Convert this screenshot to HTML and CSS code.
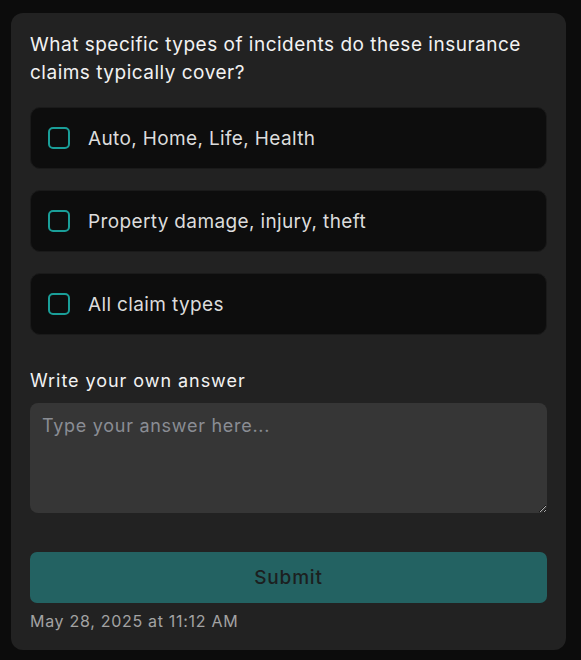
FILE: index.html
```html
<!DOCTYPE html>
<html>
<head>
<meta charset="utf-8">
<link rel="stylesheet" href="styles.css">
</head>
<body>
<div class="card">
  <p class="question">What specific types of incidents do these insurance claims typically cover?</p>
  <div class="options">
    <label class="option"><span class="box"></span><span class="opt-text">Auto, Home, Life, Health</span></label>
    <label class="option"><span class="box"></span><span class="opt-text">Property damage, injury, theft</span></label>
    <label class="option"><span class="box"></span><span class="opt-text">All claim types</span></label>
  </div>
  <div class="own-label">Write your own answer</div>
  <textarea class="answer" placeholder="Type your answer here..."></textarea>
  <button class="submit">Submit</button>
  <div class="date">May 28, 2025 at 11:12 AM</div>
</div>
</body>
</html>
```

FILE: styles.css
```css
html, body {
  margin: 0;
  padding: 0;
  background: #0c0c0c;
}
body {
  padding: 13px 15px 12px 11px;
  font-family: Inter, "Noto Sans", sans-serif;
}
.card {
  background: #222222;
  border-radius: 12px;
  padding: 18px 19px 19px 19px;
  display: flex;
  flex-direction: column;
}
.question {
  margin: 0;
  color: #f2f2f2;
  font-size: 19px;
  line-height: 28px;
  font-weight: 400;
  letter-spacing: 0.5px;
}
.options {
  display: flex;
  flex-direction: column;
  gap: 21px;
  margin-top: 20px;
}
.option {
  display: flex;
  align-items: center;
  gap: 18px;
  height: 62px;
  box-sizing: border-box;
  padding: 0 17px;
  background: #0d0d0d;
  border: 1px solid #1a1a1a;
  border-radius: 10px;
}
.box {
  width: 22px;
  height: 22px;
  box-sizing: border-box;
  border: 2px solid #1a9e98;
  border-radius: 5px;
  flex: none;
}
.opt-text {
  color: #dcdcdc;
  font-size: 19px;
  letter-spacing: 0.36px;
}
.own-label {
  margin-top: 34px;
  color: #f2f2f2;
  font-size: 18px;
  line-height: 24px;
  font-weight: 400;
  letter-spacing: 0.95px;
}
.answer {
  margin-top: 10px;
  height: 110px;
  box-sizing: border-box;
  background: #363636;
  border: none;
  border-radius: 8px;
  padding: 12px 12px;
  font-family: Inter, "Noto Sans", sans-serif;
  font-size: 18px;
  letter-spacing: 0.72px;
  color: #eee;
  resize: vertical;
  outline: none;
}
.answer::placeholder {
  color: #8a8d94;
}
.submit {
  margin-top: 39px;
  height: 51px;
  background: #236262;
  border: none;
  border-radius: 7px;
  color: #1c1f1f;
  font-family: Inter, "Noto Sans", sans-serif;
  font-size: 19px;
  font-weight: 500;
  letter-spacing: 0.8px;
}
.date {
  margin-top: 8px;
  color: #a3a3a3;
  font-size: 16px;
  line-height: 20px;
  letter-spacing: 0.7px;
}
```
